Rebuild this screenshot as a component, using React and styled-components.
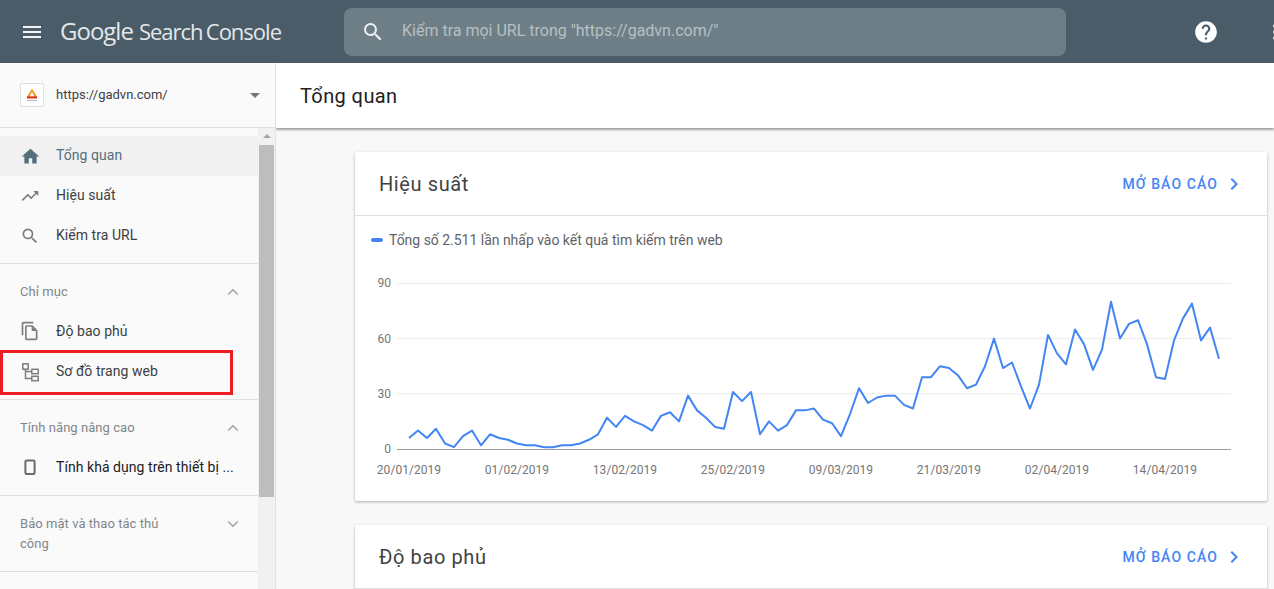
import React from 'react';
import styled, { createGlobalStyle } from 'styled-components';
import {
  MdMenu,
  MdSearch,
  MdHelp,
  MdMoreVert,
  MdArrowDropDown,
  MdHome,
  MdTrendingUp,
  MdOutlineFileCopy,
  MdChevronRight,
} from 'react-icons/md';

const GlobalStyle = createGlobalStyle`
  html, body {
    margin: 0;
    height: 100%;
    overflow: hidden;
    font-family: Roboto, "Liberation Sans", sans-serif;
  }
  * {
    box-sizing: border-box;
  }
`;

const Page = styled.div`
  width: 100%;
  height: 100vh;
  display: flex;
  flex-direction: column;
  overflow: hidden;
`;

const TopBar = styled.header`
  height: 63px;
  flex: none;
  display: flex;
  align-items: center;
  background: #4a5c68;
  color: #fff;
  overflow: hidden;
`;

const MenuIcon = styled(MdMenu)`
  flex: none;
  margin-left: 20px;
  font-size: 24px;
  color: #f1f3f4;
`;

const Logo = styled.div`
  flex: none;
  width: 284px;
  margin-left: 16px;
  padding-bottom: 2px;
  font-family: "Open Sans", sans-serif;
  font-size: 22px;
  letter-spacing: -1px;
  word-spacing: -1.5px;
  white-space: nowrap;
  color: #e4e7e8;
`;

const LogoGoogle = styled.span`
  font-weight: 500;
  font-size: 24px;
  margin-right: 6px;
`;

const SearchBox = styled.div`
  flex: none;
  width: 722px;
  height: 48px;
  display: flex;
  align-items: center;
  padding-left: 17px;
  border-radius: 8px;
  background: #6d7e86;
  color: #b7c0c4;
  font-size: 16px;
`;

const SearchIcon = styled(MdSearch)`
  flex: none;
  font-size: 24px;
  color: #eef0f1;
  margin-right: 17px;
`;

const SearchHint = styled.span`
  padding-bottom: 2px;
`;

const HelpIcon = styled(MdHelp)`
  flex: none;
  margin-left: 127px;
  font-size: 26px;
  color: #fff;
`;

const MoreIcon = styled(MdMoreVert)`
  flex: none;
  margin-left: 44px;
  font-size: 24px;
  color: #f1f3f4;
`;

const Body = styled.div`
  flex: 1;
  min-height: 0;
  display: flex;
`;

const Sidebar = styled.aside`
  width: 276px;
  flex: none;
  display: flex;
  flex-direction: column;
  background: #fafafa;
  border-right: 1px solid #e0e0e0;
`;

const Property = styled.div`
  height: 65px;
  flex: none;
  display: flex;
  align-items: center;
  padding: 0 8px 0 20px;
  border-bottom: 1px solid #e0e0e0;
  font-size: 13px;
  color: #3c4043;
`;

const Favicon = styled.div`
  width: 24px;
  height: 24px;
  flex: none;
  display: flex;
  align-items: center;
  justify-content: center;
  margin-right: 12px;
  background: #fff;
  border: 1px solid #e0e0e0;
  border-radius: 2px;
`;

const PropertyName = styled.span`
  flex: 1;
  padding-bottom: 2px;
`;

const DropIcon = styled(MdArrowDropDown)`
  flex: none;
  font-size: 24px;
  color: #757575;
`;

const NavArea = styled.div`
  flex: 1;
  min-height: 0;
  display: flex;
`;

const Nav = styled.nav`
  width: 258px;
  flex: none;
`;

const Section = styled.section`
  padding: ${(p) => (p.$first ? '8px 0 7px' : '18px 0 8px')};
  border-bottom: 1px solid #e0e0e0;
`;

const SectionHead = styled.div`
  display: flex;
  justify-content: space-between;
  align-items: flex-start;
  padding: 0 19px 0 20px;
  margin-bottom: 9px;
  font-size: 13px;
  line-height: 20px;
  letter-spacing: 0.05px;
  color: #80868b;
`;

const SectionTitle = styled.span`
  width: 165px;
`;

const Chevron = styled.svg`
  flex: none;
  margin-top: 4px;
  transform: ${(p) => (p.$open ? 'none' : 'scaleY(-1)')};
`;

const NavItem = styled.div`
  position: relative;
  height: 40px;
  display: flex;
  align-items: center;
  padding-left: 18px;
  font-size: 14px;
  letter-spacing: 0.05px;
  white-space: nowrap;
  color: ${(p) => (p.$active ? '#546e7a' : p.$dark ? '#202124' : '#3c4043')};
  background: ${(p) => (p.$active ? '#f1f1f1' : 'transparent')};
`;

const NavLabel = styled.span`
  padding-bottom: ${(p) => (p.$raised ? '2px' : '0')};
`;

const NavIconBox = styled.span`
  width: 24px;
  height: 24px;
  flex: none;
  display: flex;
  align-items: center;
  justify-content: center;
  margin-right: 14px;
  font-size: ${(p) => p.$size || 20}px;
  color: ${(p) => (p.$active ? '#546e7a' : '#7d7d7d')};
`;

const Highlight = styled.div`
  position: absolute;
  left: 0;
  top: -1px;
  width: 233px;
  height: 45px;
  border: 3px solid #ed1c24;
`;

const ScrollTrack = styled.div`
  width: 17px;
  flex: none;
  display: flex;
  flex-direction: column;
  align-items: center;
  background: #f1f1f1;
`;

const ScrollArrow = styled.div`
  width: 0;
  height: 0;
  margin-top: 6px;
  margin-bottom: 7px;
  border-left: 4px solid transparent;
  border-right: 4px solid transparent;
  border-bottom: 4px solid #a3a3a3;
`;

const ScrollThumb = styled.div`
  width: 15px;
  height: 352px;
  background: #bdbdbd;
`;

const Main = styled.main`
  flex: 1;
  min-width: 0;
  background: #f8f8f8;
  overflow: hidden;
`;

const PageTitle = styled.div`
  height: 65px;
  display: flex;
  align-items: center;
  padding: 1px 0 0 24px;
  background: #fff;
  font-size: 20px;
  letter-spacing: 0.4px;
  color: #212121;
  box-shadow: 0 2px 2px rgba(0, 0, 0, 0.35);
`;

const Cards = styled.div`
  display: flex;
  flex-direction: column;
  gap: 24px;
  padding: 24px 7px 0 79px;
`;

const Card = styled.div`
  flex: none;
  height: ${(p) => p.$height}px;
  background: #fff;
  border-radius: 2px;
  box-shadow: 0 1px 3px rgba(0, 0, 0, 0.3);
`;

const CardHead = styled.div`
  height: 64px;
  display: flex;
  align-items: center;
  justify-content: space-between;
  padding: 0 24px;
  border-bottom: 1px solid #e0e0e0;
`;

const CardTitle = styled.div`
  font-size: 20px;
  letter-spacing: 0.6px;
  color: #424242;
`;

const ReportLink = styled.div`
  display: flex;
  align-items: center;
  font-size: 14px;
  font-weight: 500;
  letter-spacing: 1.1px;
  color: #4285f4;
`;

const LinkIcon = styled(MdChevronRight)`
  font-size: 24px;
  margin: 0 -3px 0 4px;
`;

const Legend = styled.div`
  display: flex;
  align-items: center;
  height: 20px;
  margin: 14px 0 10px 16px;
  font-size: 14px;
  letter-spacing: -0.02px;
  color: #5f6368;
`;

const LegendDash = styled.span`
  width: 12px;
  height: 4px;
  margin-right: 6px;
  border-radius: 2px;
  background: #4285f4;
`;

const ChartSvg = styled.svg`
  display: block;
`;

const AxisLabel = styled.text`
  font-family: Roboto, sans-serif;
  font-size: 12px;
  letter-spacing: 0.05px;
  fill: #757575;
`;

const clicks = [
  6, 10, 6, 11, 3, 1, 7, 10, 2, 8, 6, 5, 3, 2, 2, 1, 1, 2, 2, 3, 5, 8, 17, 12, 18, 15, 13, 10, 18, 20, 15, 29, 21, 17,
  12, 11, 31, 26, 31, 8, 15, 10, 13, 21, 21, 22, 16, 14, 7, 19, 33, 25, 28, 29, 29, 24, 22, 39, 39, 45, 44, 40, 33, 35,
  45, 60, 44, 47, 34, 22, 35, 62, 52, 46, 65, 57, 43, 54, 80, 60, 68, 70, 57, 39, 38, 59, 71, 79, 59, 66, 49,
];

const dates = ['20/01/2019', '01/02/2019', '13/02/2019', '25/02/2019', '09/03/2019', '21/03/2019', '02/04/2019', '14/04/2019'];

const chartX = (i) => 54 + i * 9;
const chartY = (v) => 189 - v * 1.84;

const Chart = () => (
  <ChartSvg width="910" height="222" viewBox="0 0 910 222">
    {[30, 60, 90].map((v) => (
      <line key={v} x1="42" x2="876" y1={chartY(v)} y2={chartY(v)} stroke="#ececec" />
    ))}
    <line x1="42" x2="876" y1="189.5" y2="189.5" stroke="#9e9e9e" />
    {[0, 30, 60, 90].map((v) => (
      <AxisLabel key={v} x="36" y={chartY(v) + 4} textAnchor="end">
        {v}
      </AxisLabel>
    ))}
    {dates.map((d, i) => (
      <AxisLabel key={d} x={chartX(i * 12)} y="214" textAnchor="middle">
        {d}
      </AxisLabel>
    ))}
    <polyline
      fill="none"
      stroke="#4285f4"
      strokeWidth="2"
      strokeLinejoin="round"
      points={clicks.map((v, i) => `${chartX(i)},${chartY(v)}`).join(' ')}
    />
  </ChartSvg>
);

const SiteLogo = () => (
  <svg width="16" height="16" viewBox="0 0 16 16">
    <path d="M8 1.5 L13.5 10.5 H2.5 Z" fill="#f29a1f" />
    <path d="M8 5 L10.5 9.5 H5.5 Z" fill="#fff" />
    <path d="M3 9.5 H13 V11.5 H3 Z" fill="#d9301f" />
    <rect x="3" y="13" width="10" height="1" fill="#b9b9b9" />
  </svg>
);

const SitemapIcon = () => (
  <svg width="24" height="24" viewBox="0 0 24 24" fill="none" stroke="#7d7d7d" strokeWidth="1.5">
    <rect x="4.8" y="4.8" width="5.4" height="5.4" />
    <rect x="13.8" y="10.3" width="6.4" height="4.4" />
    <rect x="13.8" y="17.3" width="6.4" height="4.4" />
    <path d="M7.5 10.2 V19.5 H13.8 M7.5 12.5 H13.8" />
  </svg>
);

const PhoneIcon = () => (
  <svg width="24" height="24" viewBox="0 0 24 24" fill="none" stroke="#6b6b6b" strokeWidth="2">
    <rect x="7.4" y="5.5" width="9.2" height="13.5" rx="1.2" />
  </svg>
);

const Toggle = ({ open }) => (
  <Chevron $open={open} width="12" height="12" viewBox="0 0 12 12" fill="none" stroke="#9aa0a6" strokeWidth="1.4">
    <path d="M1.2 8.5 L6 3.8 L10.8 8.5" />
  </Chevron>
);

export default function App() {
  return (
    <Page>
      <GlobalStyle />
      <TopBar>
        <MenuIcon />
        <Logo>
          <LogoGoogle>Google</LogoGoogle>Search Console
        </Logo>
        <SearchBox>
          <SearchIcon />
          <SearchHint>Kiểm tra mọi URL trong "https://gadvn.com/"</SearchHint>
        </SearchBox>
        <HelpIcon />
        <MoreIcon />
      </TopBar>
      <Body>
        <Sidebar>
          <Property>
            <Favicon>
              <SiteLogo />
            </Favicon>
            <PropertyName>https://gadvn.com/</PropertyName>
            <DropIcon />
          </Property>
          <NavArea>
            <Nav>
              <Section $first>
                <NavItem $active>
                  <NavIconBox $active $size={21}>
                    <MdHome />
                  </NavIconBox>
                  <NavLabel $raised>Tổng quan</NavLabel>
                </NavItem>
                <NavItem>
                  <NavIconBox>
                    <MdTrendingUp />
                  </NavIconBox>
                  <NavLabel $raised>Hiệu suất</NavLabel>
                </NavItem>
                <NavItem>
                  <NavIconBox>
                    <MdSearch />
                  </NavIconBox>
                  <NavLabel $raised>Kiểm tra URL</NavLabel>
                </NavItem>
              </Section>
              <Section>
                <SectionHead>
                  <SectionTitle>Chỉ mục</SectionTitle>
                  <Toggle open />
                </SectionHead>
                <NavItem>
                  <NavIconBox>
                    <MdOutlineFileCopy />
                  </NavIconBox>
                  <NavLabel>Độ bao phủ</NavLabel>
                </NavItem>
                <NavItem>
                  <NavIconBox>
                    <SitemapIcon />
                  </NavIconBox>
                  <NavLabel>Sơ đồ trang web</NavLabel>
                  <Highlight />
                </NavItem>
              </Section>
              <Section>
                <SectionHead>
                  <SectionTitle>Tính năng nâng cao</SectionTitle>
                  <Toggle open />
                </SectionHead>
                <NavItem $dark>
                  <NavIconBox>
                    <PhoneIcon />
                  </NavIconBox>
                  <NavLabel>Tính khả dụng trên thiết bị ...</NavLabel>
                </NavItem>
              </Section>
              <Section>
                <SectionHead>
                  <SectionTitle>Bảo mật và thao tác thủ công</SectionTitle>
                  <Toggle />
                </SectionHead>
              </Section>
            </Nav>
            <ScrollTrack>
              <ScrollArrow />
              <ScrollThumb />
            </ScrollTrack>
          </NavArea>
        </Sidebar>
        <Main>
          <PageTitle>Tổng quan</PageTitle>
          <Cards>
            <Card $height={349}>
              <CardHead>
                <CardTitle>Hiệu suất</CardTitle>
                <ReportLink>
                  MỞ BÁO CÁO
                  <LinkIcon />
                </ReportLink>
              </CardHead>
              <Legend>
                <LegendDash />
                Tổng số 2.511 lần nhấp vào kết quả tìm kiếm trên web
              </Legend>
              <Chart />
            </Card>
            <Card $height={300}>
              <CardHead>
                <CardTitle>Độ bao phủ</CardTitle>
                <ReportLink>
                  MỞ BÁO CÁO
                  <LinkIcon />
                </ReportLink>
              </CardHead>
            </Card>
          </Cards>
        </Main>
      </Body>
    </Page>
  );
}
